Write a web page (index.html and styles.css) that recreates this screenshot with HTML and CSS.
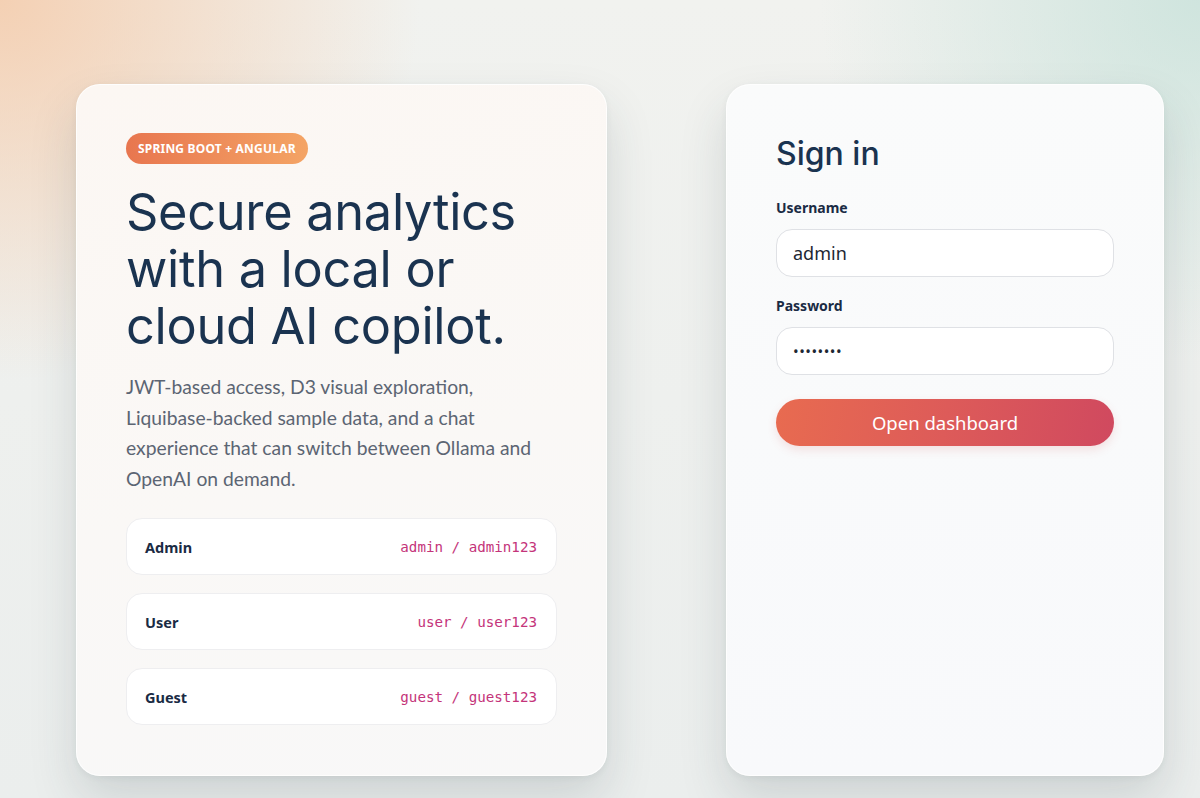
FILE: index.html
```html
<!DOCTYPE html>
<html lang="en">
<head>
    <meta charset="UTF-8">
    <meta name="viewport" content="width=device-width, initial-scale=1.0">
    <title>Sign in</title>
    <link rel="stylesheet" href="styles.css">
</head>
<body>

<main class="login-page">
    <!-- Intro panel with demo accounts -->
    <section class="intro-card">
        <span class="badge">Spring Boot + Angular</span>
        <h1>Secure analytics with a local or cloud AI copilot.</h1>
        <p class="lead">JWT-based access, D3 visual exploration, Liquibase-backed sample data, and a chat experience that can switch between Ollama and OpenAI on demand.</p>

        <div class="accounts">
            <div class="account-row">
                <strong>Admin</strong>
                <code>admin / admin123</code>
            </div>
            <div class="account-row">
                <strong>User</strong>
                <code>user / user123</code>
            </div>
            <div class="account-row">
                <strong>Guest</strong>
                <code>guest / guest123</code>
            </div>
        </div>
    </section>

    <!-- Login form -->
    <section class="login-card">
        <h2>Sign in</h2>
        <form class="login-form" onsubmit="return false;">
            <div class="field">
                <label for="username">Username</label>
                <input type="text" id="username" value="admin">
            </div>
            <div class="field">
                <label for="password">Password</label>
                <input type="password" id="password" value="admin123">
            </div>
            <button type="submit">Open dashboard</button>
        </form>
    </section>
</main>

</body>
</html>
```

FILE: styles.css
```css
/* General styling */
* {
    box-sizing: border-box;
}
body {
    margin: 0;
    min-height: 798px;
    font-family: 'Lato', 'Noto Sans', sans-serif;
    color: #1b3350;
    background:
        radial-gradient(ellipse 420px 380px at 0 0, rgba(245, 200, 165, 0.8), rgba(245, 200, 165, 0) 100%),
        radial-gradient(ellipse 380px 360px at 100% 0, rgba(196, 224, 216, 0.75), rgba(196, 224, 216, 0) 100%),
        linear-gradient(180deg, #f1f2ef 0%, #ebeeed 100%);
}
.login-page {
    display: flex;
    gap: 119px;
    padding: 84px 0 0 76px;
}

/* Cards */
.intro-card,
.login-card {
    border-radius: 24px;
    border: 1px solid rgba(255, 255, 255, 0.8);
    box-shadow: 0 24px 48px rgba(40, 60, 70, 0.15), 0 2px 6px rgba(40, 60, 70, 0.06);
    height: 692px;
}
.intro-card {
    width: 531px;
    padding: 48px 49px;
    background: linear-gradient(165deg, #fcf7f3 0%, #faf8f6 55%, #f8f8f8 100%);
}
.login-card {
    width: 438px;
    padding: 50px 49px;
    background: linear-gradient(180deg, #fafbfb 0%, #f8f9fb 100%);
}

/* Intro */
.badge {
    display: inline-block;
    padding: 0 12px;
    height: 31px;
    line-height: 31px;
    border-radius: 16px;
    background: linear-gradient(90deg, #e8764f, #f4a465);
    color: #fff;
    font-family: 'Noto Sans', sans-serif;
    font-size: 12px;
    font-weight: 700;
    letter-spacing: 0.2px;
    text-transform: uppercase;
}
h1 {
    margin: 19px 0 0;
    font-family: 'Inter', sans-serif;
    font-weight: 400;
    font-size: 50.5px;
    line-height: 57px;
    letter-spacing: -0.3px;
    color: #1a3350;
}
.lead {
    max-width: 412px;
    margin: 18px 0 0;
    font-size: 19.3px;
    line-height: 30.6px;
    color: #5c6573;
}
.accounts {
    display: flex;
    flex-direction: column;
    gap: 18px;
    margin-top: 24px;
}
.account-row {
    display: flex;
    justify-content: space-between;
    align-items: center;
    height: 57px;
    padding: 0 19px 0 18px;
    background: #fff;
    border: 1px solid #eeeef0;
    border-radius: 16px;
}
.account-row strong {
    font-family: 'Noto Sans', sans-serif;
    font-size: 14.5px;
    font-weight: 700;
    color: #1a2b44;
}
.account-row code {
    font-family: 'DejaVu Sans Mono', monospace;
    font-size: 14.2px;
    color: #c4347a;
}

/* Login form */
h2 {
    margin: 0;
    font-family: 'Inter', sans-serif;
    font-weight: 500;
    font-size: 32px;
    line-height: 38px;
    color: #1a3350;
}
.login-form {
    margin-top: 25px;
}
.field {
    margin-bottom: 19px;
}
label {
    display: block;
    margin-bottom: 12px;
    font-family: 'Noto Sans', sans-serif;
    font-size: 14px;
    font-weight: 700;
    color: #1a2b44;
}
input {
    width: 100%;
    height: 48px;
    padding: 0 16px;
    border: 1px solid #dfe1e5;
    border-radius: 16px;
    background: #fff;
    font-family: 'Noto Sans', sans-serif;
    font-size: 18px;
    color: #1d2733;
    outline: none;
}
input[type="password"] {
    font-size: 15px;
    letter-spacing: 0.5px;
}
button {
    width: 100%;
    height: 47px;
    margin-top: 5px;
    border: none;
    border-radius: 24px;
    background: linear-gradient(100deg, #e86b50 0%, #dd5b59 50%, #d0495f 100%);
    color: #fff;
    font-family: 'Noto Sans', sans-serif;
    font-size: 18.5px;
    cursor: pointer;
    box-shadow: 0 4px 10px rgba(210, 80, 80, 0.15);
}
```
